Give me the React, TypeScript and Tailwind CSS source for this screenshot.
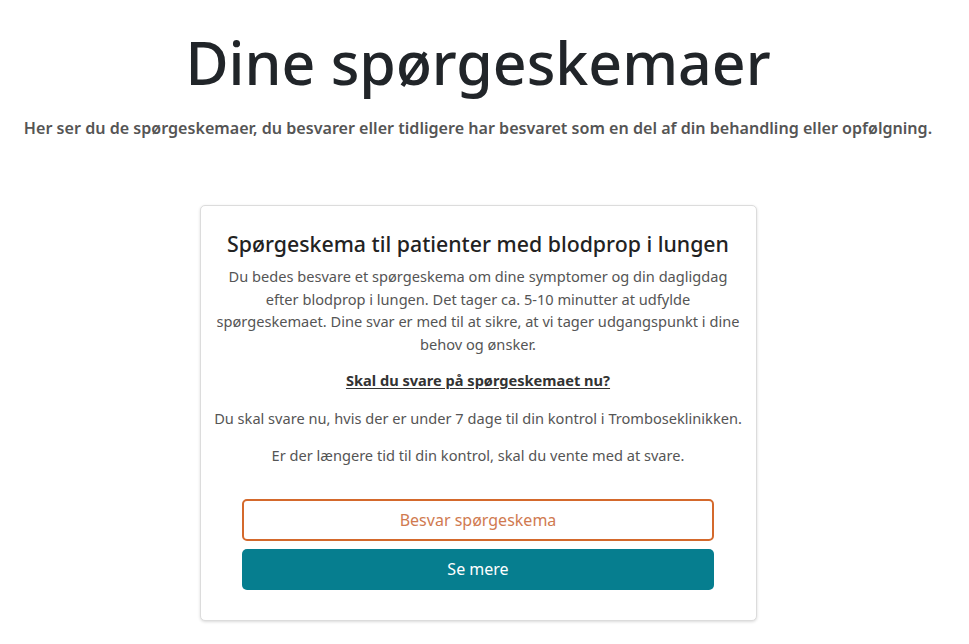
import React from "react";

export default function App() {
  return (
    <div
      className="min-h-screen bg-white pr-[13px]"
      style={{ fontFamily: '"Noto Sans", sans-serif' }}
    >
      <div className="flex flex-col items-center pt-[20px]">
        <h1 className="text-[59px] leading-[84px] font-medium text-[#212529]">
          Dine spørgeskemaer
        </h1>
        <p className="mt-[13px] text-[16.1px] leading-[22px] font-semibold text-[#555555]">
          Her ser du de spørgeskemaer, du besvarer eller tidligere har besvaret som en del af din behandling eller opfølgning.
        </p>
        <div className="mt-[66px] w-[557px] rounded-[5px] border border-[#dcdcdc] bg-white px-[12px] pt-[22px] pb-[30px] text-center shadow-[0_1px_3px_rgba(0,0,0,0.15)]">
          <h2 className="text-[21.3px] leading-[32px] font-medium text-[#222222]">
            Spørgeskema til patienter med blodprop i lungen
          </h2>
          <p className="mt-[5px] text-[14.6px] leading-[22.5px] text-[#555555]">
            Du bedes besvare et spørgeskema om dine symptomer og din dagligdag efter blodprop i lungen. Det tager ca. 5-10 minutter at udfylde spørgeskemaet. Dine svar er med til at sikre, at vi tager udgangspunkt i dine behov og ønsker.
          </p>
          <p className="mt-[14px] text-[14.6px] leading-[22.5px] font-bold text-[#333333] underline underline-offset-2">
            Skal du svare på spørgeskemaet nu?
          </p>
          <p className="mt-[15px] text-[14.6px] leading-[22.5px] text-[#555555]">
            Du skal svare nu, hvis der er under 7 dage til din kontrol i Tromboseklinikken.
          </p>
          <p className="mt-[15px] text-[14.6px] leading-[22.5px] text-[#555555]">
            Er der længere tid til din kontrol, skal du vente med at svare.
          </p>
          <div className="mx-auto mt-[32px] flex w-[472px] flex-col gap-[8px]">
            <button className="h-[42px] w-full rounded-[5px] border-2 border-[#d4692c] bg-white text-[16px] text-[#d07a50]">
              Besvar spørgeskema
            </button>
            <button className="h-[41px] w-full rounded-[5px] bg-[#067e8f] text-[16px] text-white">
              Se mere
            </button>
          </div>
        </div>
      </div>
    </div>
  );
}
